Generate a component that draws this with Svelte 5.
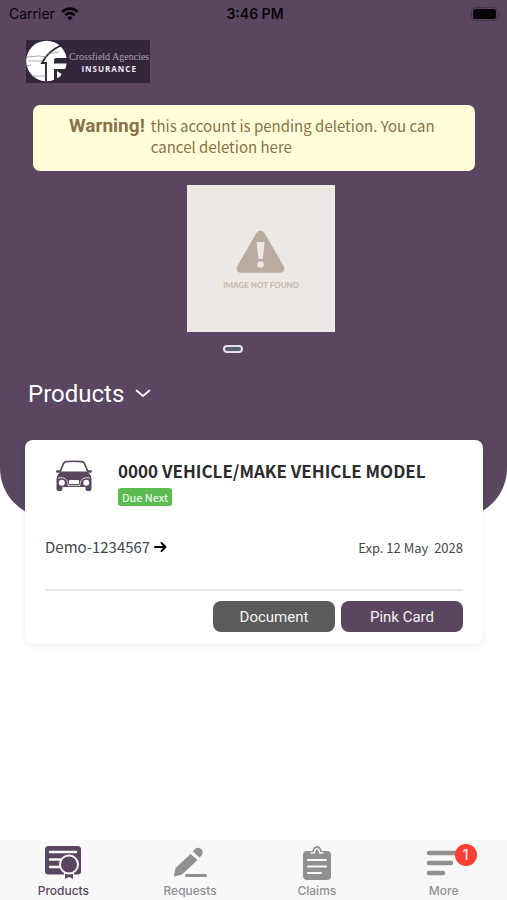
<script lang="ts">
  const policy = {
    title: '0000 VEHICLE/MAKE VEHICLE MODEL',
    status: 'Due Next',
    number: 'Demo-1234567',
    expiry: 'Exp. 12 May \u00a02028'
  }

  const tabs = [
    { id: 'products', label: 'Products', badge: 0 },
    { id: 'requests', label: 'Requests', badge: 0 },
    { id: 'claims', label: 'Claims', badge: 0 },
    { id: 'more', label: 'More', badge: 1 }
  ]

  let active = $state('products')
</script>

<div class="page">
  <header class="hero">
    <div class="status">
      <div class="carrier">
        <span>Carrier</span>
        <svg width="18" height="14" viewBox="0 0 18 14" fill="none" stroke="#08060a">
          <path d="M1.2 4.8a11.2 11.2 0 0 1 15.6 0" stroke-width="2.7" />
          <path d="M4.2 8.1a6.9 6.9 0 0 1 9.6 0" stroke-width="2.6" />
          <path d="M9 13.4L6.3 10.5a4 4 0 0 1 5.4 0z" fill="#08060a" stroke="none" />
        </svg>
      </div>
      <strong class="time">3:46 PM</strong>
      <svg class="battery" width="30" height="14" viewBox="0 0 30 14">
        <rect x="0.5" y="0.5" width="26" height="13" rx="4" fill="none" stroke="#43354a" />
        <rect x="2" y="2" width="23" height="10" rx="2.5" fill="#050406" />
        <path d="M28 5a2.4 2.4 0 0 1 0 4z" fill="#43354a" />
      </svg>
    </div>

    <div class="logo">
      <svg width="41" height="43" viewBox="0 0 41 43">
        <circle cx="20.5" cy="21" r="20.3" fill="#fff" />
        <path d="M35 5.5Q22 11 16 23h4v18" fill="none" stroke="#33263a" stroke-width="1.9" />
        <path d="M41 18H30q-2 0-2 2v3.500h13zM28 29h13v3l-5 8-4-4 5-1-6-4v9h-3z" fill="#33263a" />
        <path d="M31 32l4 4-4 2z" fill="#fff" />
        <path d="M1 17l12-1 8 1M2 21h14M1 26l4-1M6 36h14M21 14l12-2" fill="none" stroke="#8d8992" stroke-width="0.7" />
      </svg>
      <div class="brand">
        <span class="brand-name">Crossfield Agencies</span>
        <span class="brand-kind">INSURANCE</span>
      </div>
    </div>

    <div class="warning" role="alert">
      <strong>Warning!</strong>
      <p>this account is pending deletion. You can cancel deletion here</p>
    </div>

    <div class="slide">
      <svg width="50" height="44" viewBox="0 0 50 44">
        <path d="M20.3 3.2q4.2-5.4 8.4 0l19 33q2.4 6-4.2 6.6H5.5Q-1 42.2 1.3 36.2z" fill="#baaba1" />
        <path d="M20.6 12h8l-1.800 17h-4.400z" fill="#ece8e4" />
        <circle cx="24.6" cy="34.5" r="3.3" fill="#ece8e4" />
      </svg>
      <span>IMAGE NOT FOUND</span>
    </div>
    <div class="dots"><button class="dot" aria-label="Slide 1"></button></div>

    <button class="filter">
      Products
      <svg width="16" height="10" viewBox="0 0 16 10" fill="none" stroke="#fff" stroke-width="1.8" stroke-linecap="round" stroke-linejoin="round">
        <path d="M1.5 1.5L8 7L14.5 1.500" />
      </svg>
    </button>
  </header>

  <main>
    <article class="card">
      <div class="summary">
        <svg width="38" height="34" viewBox="0 0 38 34">
          <path d="M5 14L8.500 5.500Q9.300 3.900 11 3.700Q19 2.800 27 3.700Q28.700 3.900 29.500 5.500L33 14" fill="none" stroke="#5a4660" stroke-width="1.700" />
          <path d="M6 13.500h26q4.500 3 4.500 8v9.500q0 2-2 2h-2q-2 0-2-2v-2h-23v2q0 2-2 2h-2q-2 0-2-2V21.500q0-5 4.500-8z" fill="#5a4660" />
          <path d="M5.500 14.800H2.200Q1 14.700 1 13.500t1.400-1.300h4zM32.500 14.800h3.300Q37 14.700 37 13.500t-1.400-1.300h-4z" fill="#5a4660" />
          <path d="M3 20q9-2 10 6v1.500h12V26q1-8 10-6" fill="none" stroke="#e5dfe7" stroke-width="0.9" />
          <circle cx="6.800" cy="24.800" r="3" fill="#fff" />
          <circle cx="31.200" cy="24.800" r="3" fill="#fff" />
          <rect x="14" y="22" width="10" height="4" rx="0.8" fill="#fff" />
        </svg>
        <div class="heading">
          <h2>{policy.title}</h2>
          <span class="tag">{policy.status}</span>
        </div>
      </div>

      <div class="details">
        <a href="#policy">
          {policy.number}
          <svg width="13" height="12" viewBox="0 0 13 12" fill="none" stroke="#000" stroke-width="2" stroke-linecap="round" stroke-linejoin="round">
            <path d="M1 6h10.5M7.500 2l4 4-4 4" />
          </svg>
        </a>
        <span class="expiry">{policy.expiry}</span>
      </div>

      <div class="actions">
        <button class="document">Document</button>
        <button class="pink">Pink Card</button>
      </div>
    </article>
  </main>

  <nav>
    {#each tabs as tab}
      <button class="tab" class:active={active === tab.id} onclick={() => (active = tab.id)}>
        <span class="icon">
          {#if tab.id === 'products'}
            <svg width="36" height="36" viewBox="0 0 36 36">
              <path d="M3.500 1h29Q36 1 36 4.500v22q0 3-3.500 3h-29Q0 29.500 0 26.500v-22Q0 1 3.500 1z" fill="currentColor" />
              <path d="M5 7h26M5 14.500h14M5 22h9" stroke="#f8f8f8" stroke-width="2.5" stroke-linecap="round" />
              <path d="M19.500 26h9v8.500l-4.500-2-4.500 2z" fill="currentColor" stroke="#f8f8f8" stroke-width="1" />
              <circle cx="24" cy="19.500" r="9" fill="currentColor" stroke="#f8f8f8" stroke-width="2" />
              <circle cx="24" cy="19.500" r="6.500" fill="currentColor" />
            </svg>
          {:else if tab.id === 'requests'}
            <svg width="34" height="36" viewBox="0 0 34 36" fill="currentColor">
              <path d="M17.500 9l7 6L9 29.500l-7 2q-1.300 0-1-1.500l1.500-7z" />
              <path d="M20 6.500l2-2.500q3-2.500 6 0t.5 6.500l-2 2z" />
              <rect x="12" y="29" width="22" height="3" rx="1.5" />
            </svg>
          {:else if tab.id === 'claims'}
            <svg width="28" height="36" viewBox="0 0 28 36">
              <path d="M4 6h4.500q1 0 1.500-2Q11 1 14 1t4 3q.5 2 1.500 2H24q4 0 4 4v21q0 4-4 4H4q-4 0-4-4V10q0-4 4-4z" fill="currentColor" />
              <path d="M8 8h3q1.500-4.500 3-4.500T17 8h3" fill="none" stroke="#f8f8f8" stroke-width="1.5" stroke-linecap="round" />
              <path d="M5 15h18M5 21.500h18M5 28h13" stroke="#f8f8f8" stroke-width="2.2" stroke-linecap="round" />
            </svg>
          {:else}
            <svg width="36" height="36" viewBox="0 0 36 36" stroke="currentColor" stroke-width="4.5" stroke-linecap="round">
              <path d="M3 8h28M3 18h22M3 28h14" />
            </svg>
          {/if}
          {#if tab.badge}
            <span class="badge">{tab.badge}</span>
          {/if}
        </span>
        <span>{tab.label}</span>
      </button>
    {/each}
  </nav>
</div>

<style>
  :global(body) {
    background: #fff;
  }

  .page {
    display: flex;
    flex-direction: column;
    min-height: 100vh;
    font-family: "Noto Sans CJK SC", "Noto Sans", sans-serif;
    color: #2b2b2f;
  }

  button {
    border: 0;
    padding: 0;
    background: none;
    font-family: Roboto, sans-serif;
    cursor: pointer;
  }

  svg {
    display: block;
    flex: none;
  }

  .hero {
    display: flex;
    flex-direction: column;
    padding-bottom: 108px;
    background: #5a4660;
    border-radius: 0 0 50px 50px;
  }

  .status {
    display: grid;
    grid-template-columns: 1fr auto 1fr;
    align-items: center;
    height: 28px;
    padding: 0 6px 0 9px;
    font: 14px/20px Inter, sans-serif;
    color: #08060a;
  }

  .carrier {
    display: flex;
    align-items: center;
    gap: 6px;
  }

  .time {
    font-weight: 600;
  }

  .battery {
    justify-self: end;
  }

  .logo {
    display: flex;
    align-self: flex-start;
    margin: 12px 0 0 26px;
    width: 124px;
    height: 43px;
    background: #33263a;
  }

  .brand {
    display: flex;
    flex-direction: column;
    align-items: center;
    padding: 11px 0 0 2px;
    white-space: nowrap;
  }

  .brand-name {
    font: 10px/12px "Liberation Serif", serif;
    color: #aaa0ae;
  }

  .brand-kind {
    font: 700 8px/11px "Open Sans", sans-serif;
    letter-spacing: 1px;
    color: #eee9ef;
  }

  .warning {
    display: flex;
    gap: 6px;
    margin: 22px 32px 0 33px;
    padding: 10px 0 14px 36px;
    border-radius: 7px;
    background: #fffed8;
    color: #89714b;
    line-height: 21px;
  }

  .warning strong {
    font-family: Roboto, sans-serif;
    font-size: 19px;
  }

  .warning p {
    margin: 0;
    font-size: 15px;
  }

  .slide {
    display: flex;
    flex-direction: column;
    align-items: center;
    align-self: center;
    gap: 5px;
    box-sizing: border-box;
    width: 148px;
    height: 147px;
    margin: 14px 0 0 15px;
    padding-top: 45px;
    background: #ece8e4;
    font: 700 8px/12px Lato, sans-serif;
    color: #c5b5ac;
  }

  .dots {
    display: flex;
    justify-content: center;
    margin: 13px 42px 0 0;
  }

  .dot {
    width: 20px;
    height: 8px;
    border: 2px solid #e4dfe8;
    border-radius: 4px;
    background: #536078;
  }

  .filter {
    display: flex;
    align-items: center;
    align-self: flex-start;
    gap: 11px;
    margin: 25px 0 0 28px;
    font-size: 24px;
    line-height: 32px;
    color: #fff;
  }

  .card {
    position: relative;
    margin: -78px 24px 0 25px;
    padding: 18px 20px 12px;
    border-radius: 8px;
    background: #fff;
    box-shadow: 0 2px 6px rgba(0, 0, 0, 0.08);
  }

  .summary {
    display: flex;
    gap: 25px;
    padding-left: 10px;
  }

  .heading {
    display: flex;
    flex-direction: column;
    align-items: flex-start;
    gap: 4px;
  }

  h2 {
    margin: 0;
    font-size: 17px;
    line-height: 26px;
    font-weight: 700;
  }

  .tag {
    padding: 0 4px;
    border-radius: 3px;
    background: #5abb51;
    font-size: 11px;
    line-height: 18px;
    color: #fff;
  }

  .details {
    display: flex;
    justify-content: space-between;
    align-items: center;
    padding: 28px 0 29px;
    border-bottom: 2px solid #e5e5e5;
    color: #46464c;
  }

  .details a {
    display: flex;
    align-items: center;
    gap: 4px;
    font-size: 15px;
    line-height: 26px;
    color: inherit;
    text-decoration: none;
  }

  .expiry {
    font-size: 13px;
  }

  .actions {
    display: flex;
    justify-content: flex-end;
    gap: 6px;
    padding-top: 10px;
  }

  .actions button {
    width: 122px;
    height: 31px;
    border-radius: 8px;
    font-size: 15px;
    color: #f3f1f4;
  }

  .document {
    background: #5b5b5b;
  }

  .pink {
    background: #5a4660;
  }

  nav {
    display: grid;
    grid-template-columns: repeat(4, 1fr);
    position: sticky;
    bottom: 0;
    margin-top: auto;
    background: #f8f8f8;
  }

  .tab {
    display: flex;
    flex-direction: column;
    align-items: center;
    gap: 2px;
    padding: 5px 0 1px;
    font: 500 12px/16px Inter, sans-serif;
    color: #909090;
  }

  .tab.active {
    color: #5a4660;
  }

  .icon {
    position: relative;
  }

  .badge {
    position: absolute;
    top: -1px;
    right: -15px;
    width: 22px;
    height: 22px;
    border-radius: 50%;
    background: #fc3d32;
    font: 15px/22px Inter, sans-serif;
    color: #fff;
  }
</style>
